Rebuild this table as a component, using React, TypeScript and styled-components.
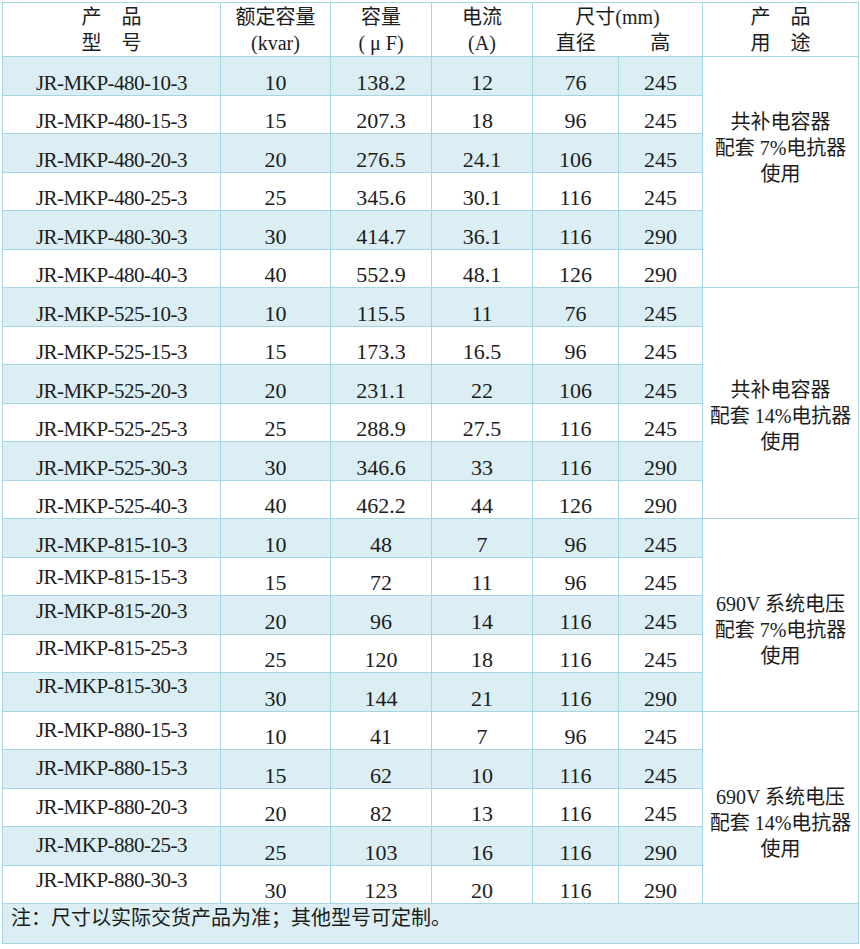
import React from "react";
import styled, { createGlobalStyle } from "styled-components";

// Palette taken from the spec sheet
const LINE = "#a6d6e3";
const SHADE = "#daeef3";
const INK = "#1c1c1c";

const GlobalStyle = createGlobalStyle`
  html, body {
    margin: 0;
    padding: 0;
    background: #fff;
  }
  body {
    padding: 2px;
    font-family: "Liberation Serif", "Noto Sans CJK SC", serif;
    color: ${INK};
  }
`;

const Table = styled.table`
  border-collapse: collapse;
  table-layout: fixed;
  width: 856px;
  font-size: 20px;
`;

const HeadCell = styled.th`
  height: 53px;
  border: 1px solid ${LINE};
  font-weight: normal;
  line-height: 26px;
  padding: 0;
  text-align: center;
  vertical-align: middle;
  white-space: pre;
`;

const SplitLine = styled.div`
  display: flex;
`;

const SplitPart = styled.span<{ $w: number }>`
  width: ${(p) => p.$w}px;
  text-align: center;
`;

const Row = styled.tr`
  height: 38.5px;
`;

// $off: how far the text centre sits below the row centre, in px
const Cell = styled.td<{ $shade?: boolean; $off: number; $model?: boolean }>`
  border: 1px solid ${LINE};
  background: ${(p) => (p.$shade ? SHADE : "#fff")};
  padding: ${(p) => (p.$off > 0 ? p.$off * 2 : 0)}px 0
    ${(p) => (p.$off < 0 ? -p.$off * 2 : 0)}px;
  font-size: ${(p) => (p.$model ? "21px" : "22px")};
  line-height: 22px;
  text-align: center;
  vertical-align: middle;
  white-space: nowrap;
  letter-spacing: ${(p) => (p.$model ? "-0.5px" : "0")};
`;

const UsageCell = styled.td<{ $shift: number }>`
  border: 1px solid ${LINE};
  background: #fff;
  padding: ${(p) => (p.$shift > 0 ? p.$shift * 2 : 0)}px 0
    ${(p) => (p.$shift < 0 ? -p.$shift * 2 : 0)}px;
  line-height: 26px;
  text-align: center;
  vertical-align: middle;
  white-space: pre;
`;

const NoteCell = styled.td`
  height: 38px;
  border: 1px solid ${LINE};
  background: ${SHADE};
  padding: 1px 8px 0;
  line-height: 26px;
  text-align: left;
  vertical-align: top;
`;

type Item = [string, string, string, string, string, string, number];

interface Group {
  usage: string;
  shift: number;
  items: Item[];
}

const groups: Group[] = [
  {
    usage: "共补电容器\n配套 7%电抗器\n使用",
    shift: -24,
    items: [
      ["JR-MKP-480-10-3", "10", "138.2", "12", "76", "245", 7],
      ["JR-MKP-480-15-3", "15", "207.3", "18", "96", "245", 7],
      ["JR-MKP-480-20-3", "20", "276.5", "24.1", "106", "245", 7],
      ["JR-MKP-480-25-3", "25", "345.6", "30.1", "116", "245", 7],
      ["JR-MKP-480-30-3", "30", "414.7", "36.1", "116", "290", 7],
      ["JR-MKP-480-40-3", "40", "552.9", "48.1", "126", "290", 7],
    ],
  },
  {
    usage: "共补电容器\n配套 14%电抗器\n使用",
    shift: 13,
    items: [
      ["JR-MKP-525-10-3", "10", "115.5", "11", "76", "245", 7],
      ["JR-MKP-525-15-3", "15", "173.3", "16.5", "96", "245", 7],
      ["JR-MKP-525-20-3", "20", "231.1", "22", "106", "245", 7],
      ["JR-MKP-525-25-3", "25", "288.9", "27.5", "116", "245", 7],
      ["JR-MKP-525-30-3", "30", "346.6", "33", "116", "290", 7],
      ["JR-MKP-525-40-3", "40", "462.2", "44", "126", "290", 7],
    ],
  },
  {
    usage: "690V 系统电压\n配套 7%电抗器\n使用",
    shift: 15,
    items: [
      ["JR-MKP-815-10-3", "10", "48", "7", "96", "245", 7],
      ["JR-MKP-815-15-3", "15", "72", "11", "96", "245", 1],
      ["JR-MKP-815-20-3", "20", "96", "14", "116", "245", -4],
      ["JR-MKP-815-25-3", "25", "120", "18", "116", "245", -5],
      ["JR-MKP-815-30-3", "30", "144", "21", "116", "290", -6],
    ],
  },
  {
    usage: "690V 系统电压\n配套 14%电抗器\n使用",
    shift: 16,
    items: [
      ["JR-MKP-880-15-3", "10", "41", "7", "96", "245", 0],
      ["JR-MKP-880-15-3", "15", "62", "10", "116", "245", -1],
      ["JR-MKP-880-20-3", "20", "82", "13", "116", "245", 0],
      ["JR-MKP-880-25-3", "25", "103", "16", "116", "290", -1],
      ["JR-MKP-880-30-3", "30", "123", "20", "116", "290", -4],
    ],
  },
];

const widths = [218, 110, 101, 101, 86, 84, 156];

export default function App() {
  let index = 0;
  return (
    <>
      <GlobalStyle />
      <Table>
        <colgroup>
          {widths.map((w, i) => (
            <col key={i} style={{ width: w }} />
          ))}
        </colgroup>
        <thead>
          <tr>
            <HeadCell>{"产　品\n型　号"}</HeadCell>
            <HeadCell>{"额定容量\n(kvar)"}</HeadCell>
            <HeadCell>{"容量\n( μ F)"}</HeadCell>
            <HeadCell>{"电流\n(A)"}</HeadCell>
            <HeadCell colSpan={2}>
              <div>尺寸(mm)</div>
              <SplitLine>
                <SplitPart $w={86}>直径</SplitPart>
                <SplitPart $w={84}>高</SplitPart>
              </SplitLine>
            </HeadCell>
            <HeadCell>{"产　品\n用　途"}</HeadCell>
          </tr>
        </thead>
        <tbody>
          {groups.map((g) =>
            g.items.map((it, k) => {
              const shade = index % 2 === 0;
              index += 1;
              const [model, kvar, uf, amp, dia, height, off] = it;
              return (
                <Row key={model + index}>
                  <Cell $shade={shade} $off={off} $model>
                    {model}
                  </Cell>
                  <Cell $shade={shade} $off={7}>{kvar}</Cell>
                  <Cell $shade={shade} $off={7}>{uf}</Cell>
                  <Cell $shade={shade} $off={7}>{amp}</Cell>
                  <Cell $shade={shade} $off={7}>{dia}</Cell>
                  <Cell $shade={shade} $off={7}>{height}</Cell>
                  {k === 0 && (
                    <UsageCell rowSpan={g.items.length} $shift={g.shift}>
                      {g.usage}
                    </UsageCell>
                  )}
                </Row>
              );
            })
          )}
          <tr>
            <NoteCell colSpan={7}>注：尺寸以实际交货产品为准；其他型号可定制。</NoteCell>
          </tr>
        </tbody>
      </Table>
    </>
  );
}
